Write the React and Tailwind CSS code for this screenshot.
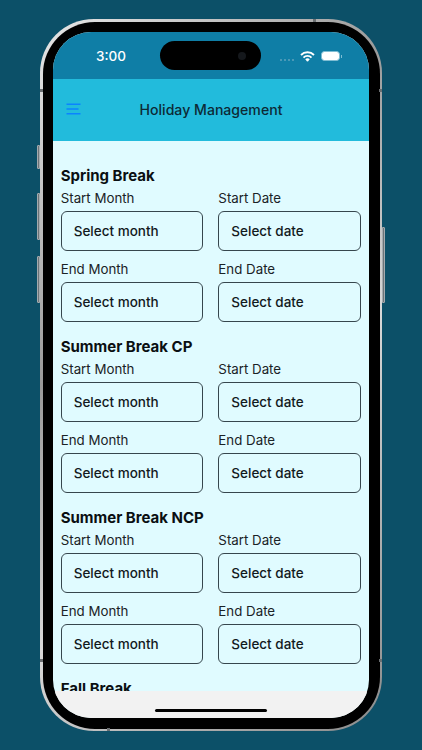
import React from 'react'

const font = { fontFamily: 'Inter, "Liberation Sans", sans-serif' }

const Field = ({ label, value }) => (
  <div className="flex flex-col">
    <span className="h-[23px] text-[13.3px] leading-[20px] text-[#1a2226]">{label}</span>
    <div className="flex h-[40px] items-center rounded-[6px] border border-[#36464d] pl-[12px] text-[13.5px] font-[450] text-[#12191d]">
      {value}
    </div>
  </div>
)

const SectionTitle = ({ title }) => (
  <h2 className="h-[24px] text-[15px] font-bold leading-[24px] text-[#0a0f12]">{title}</h2>
)

const BreakSection = ({ title }) => (
  <section className="h-[171px]">
    <SectionTitle title={title} />
    <div className="grid grid-cols-2 gap-x-[15.3px] gap-y-[8px]">
      <Field label="Start Month" value="Select month" />
      <Field label="Start Date" value="Select date" />
      <Field label="End Month" value="Select month" />
      <Field label="End Date" value="Select date" />
    </div>
  </section>
)

const App = () => {
  return (
    <div className="flex h-[750px] w-full justify-center overflow-hidden bg-[#0c5068] pt-[19px]" style={font}>
      <div className="relative h-[712px] w-[342px] rounded-[54px] bg-[linear-gradient(135deg,#e8e8e8,#9a9a9a_35%,#d8d8d8_60%,#8a8a8a)] p-[2.5px]">
        {/* side buttons */}
        <div className="absolute left-[-3px] top-[126px] h-[24px] w-[3px] rounded-l-[1px] border border-[#a4abaf] bg-[#6d7478]" />
        <div className="absolute left-[-3px] top-[174px] h-[47px] w-[3px] rounded-l-[1px] border border-[#a4abaf] bg-[#6d7478]" />
        <div className="absolute left-[-3px] top-[237px] h-[47px] w-[3px] rounded-l-[1px] border border-[#a4abaf] bg-[#6d7478]" />
        <div className="absolute right-[-3px] top-[208px] h-[76px] w-[3px] rounded-r-[1px] border border-[#a4abaf] bg-[#6d7478]" />

        {/* antenna notches */}
        <div className="absolute left-0 top-[70px] h-[3px] w-[3px] bg-[#6b6f72]" />
        <div className="absolute right-0 top-[70px] h-[3px] w-[3px] bg-[#6b6f72]" />
        <div className="absolute left-0 top-[640px] h-[3px] w-[3px] bg-[#6b6f72]" />
        <div className="absolute right-0 top-[640px] h-[3px] w-[3px] bg-[#6b6f72]" />
        <div className="absolute right-[66px] top-0 h-[3px] w-[3px] bg-[#6b6f72]" />
        <div className="absolute bottom-0 left-[67px] h-[3px] w-[3px] bg-[#6b6f72]" />

        <div className="h-full w-full rounded-[52px] bg-black px-[10.5px] pb-[11px] pt-[10.5px]">
          <div className="relative flex h-full w-full flex-col overflow-hidden rounded-[38px] bg-[#e0fbff]">
            {/* dynamic island */}
            <div className="absolute left-[107px] top-[9px] flex h-[29px] w-[101px] items-center justify-end rounded-full bg-black pr-[15px]">
              <div className="h-[8px] w-[8px] rounded-full bg-[#15181c]" />
            </div>

            <div className="flex h-[47px] shrink-0 items-center justify-between bg-[#0f7ea6] pl-[43px] pr-[27.5px] pt-[1px]">
              <span className="text-[13.5px] font-medium text-white">3:00</span>
              <div className="flex items-center">
                <div className="mr-[6px] mt-[7px] flex gap-[2px]">
                  <div className="h-[2px] w-[2px] rounded-full bg-[#5fa3bd]" />
                  <div className="h-[2px] w-[2px] rounded-full bg-[#5fa3bd]" />
                  <div className="h-[2px] w-[2px] rounded-full bg-[#5fa3bd]" />
                  <div className="h-[2px] w-[2px] rounded-full bg-[#5fa3bd]" />
                </div>
                <svg width="15" height="11" viewBox="0 0 15 11" fill="none" stroke="#fff" strokeWidth="1.9">
                  <path d="M1 4a9.2 9.2 0 0 1 13 0" />
                  <path d="M3.5 6.6a5.6 5.6 0 0 1 8 0" />
                  <path d="M5.9 9a2.3 2.3 0 0 1 3.2 0" />
                  <circle cx="7.5" cy="9.6" r="1" fill="#fff" stroke="none" />
                </svg>
                <div className="ml-[6px] h-[10px] w-[19px] rounded-[3.5px] border border-[#7fbdd3] bg-white" />
                <div className="ml-[1px] h-[3px] w-[1px] bg-[#7fbdd3]" />
              </div>
            </div>

            <header className="relative flex h-[62px] shrink-0 items-center justify-center bg-[#22bbdc]">
              <svg className="absolute left-[13px] top-[24px]" width="15" height="12" viewBox="0 0 15 12" fill="none" stroke="#0a84ff" strokeWidth="1.4">
                <path d="M0.5 1.2h14" />
                <path d="M0.5 6h12" />
                <path d="M0.5 10.8h14" />
              </svg>
              <h1 className="text-[14.1px] font-medium text-[#0d2a36]">Holiday Management</h1>
            </header>

            <main className="flex-1 overflow-hidden pl-[7.7px] pr-[8.3px] pt-[23px]">
              <BreakSection title="Spring Break" />
              <BreakSection title="Summer Break CP" />
              <BreakSection title="Summer Break NCP" />
              <SectionTitle title="Fall Break" />
            </main>

            <div className="flex h-[26.5px] shrink-0 justify-center bg-[#f2f2f2]">
              <div className="mt-[17.5px] h-[3.5px] w-[112px] rounded-full bg-black" />
            </div>
          </div>
        </div>
      </div>
    </div>
  )
}

export default App
